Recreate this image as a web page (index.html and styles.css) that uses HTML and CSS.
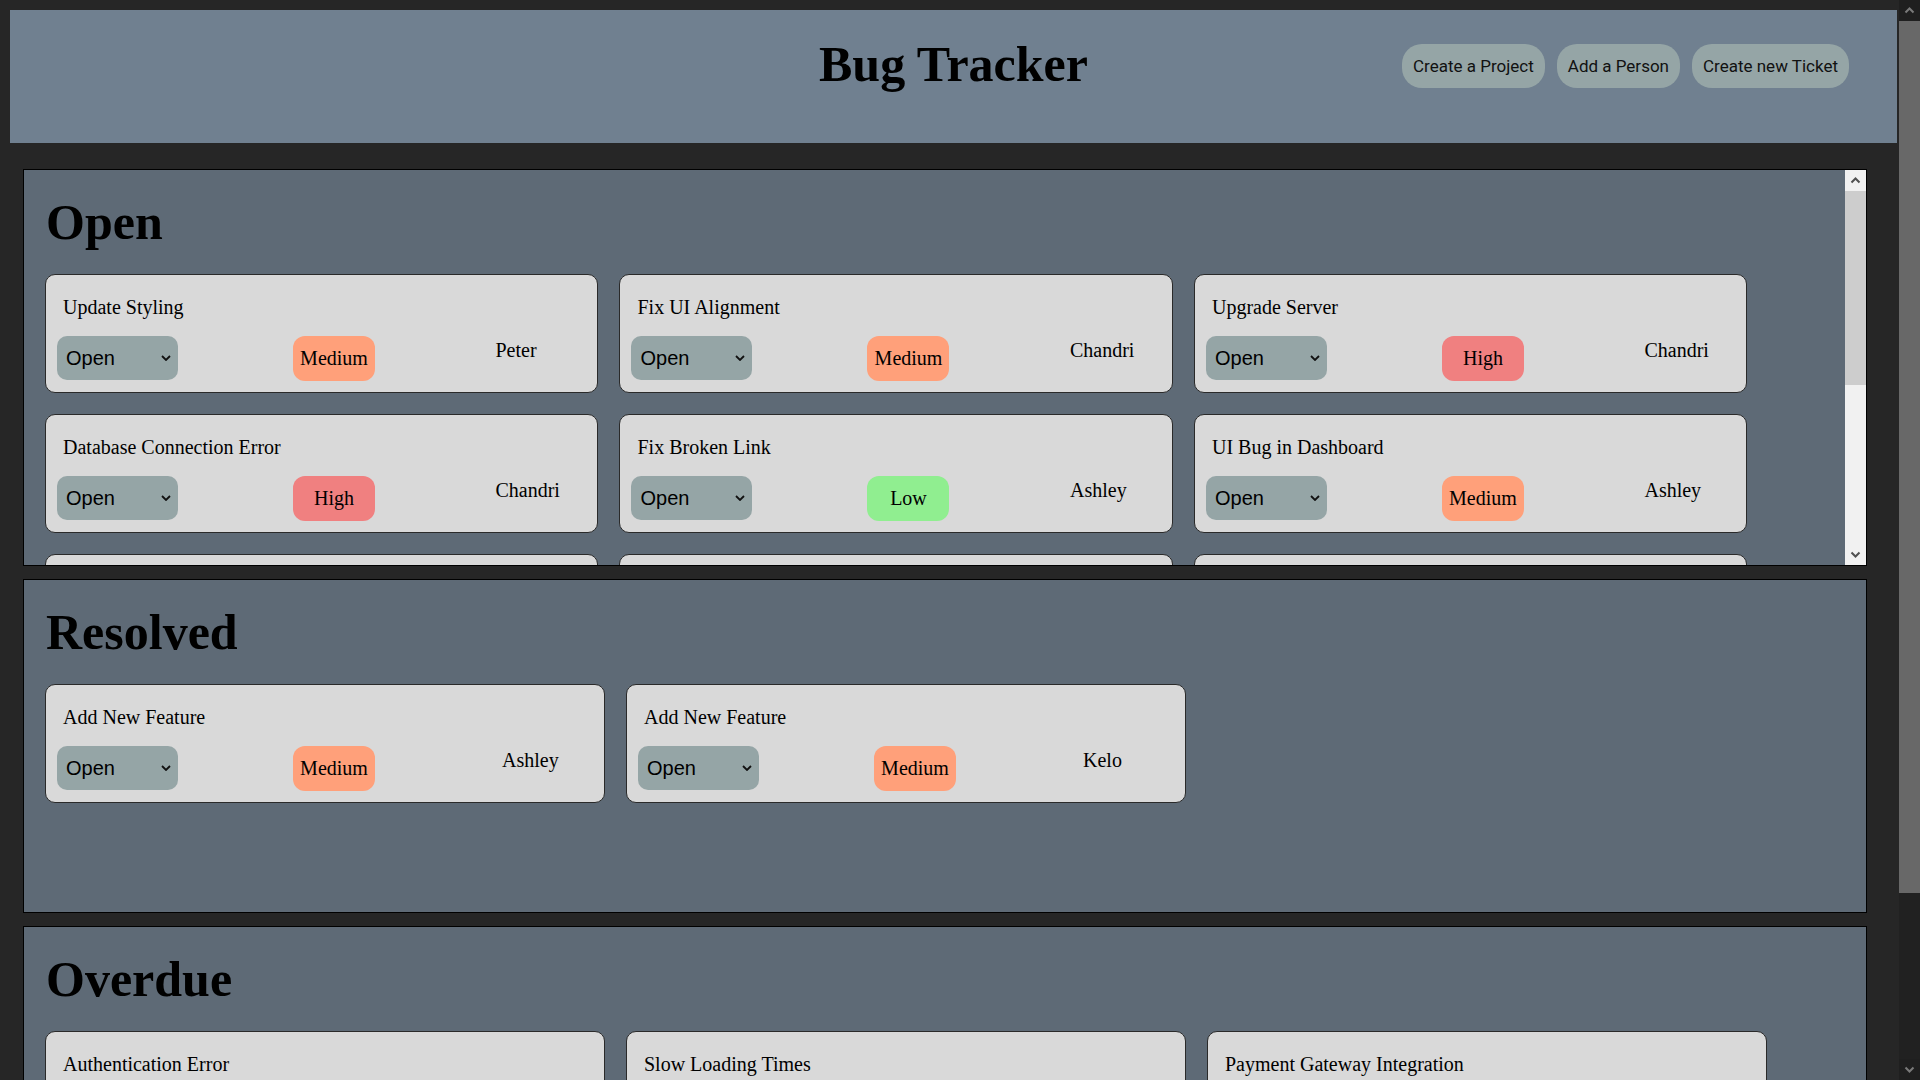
FILE: index.html
```html
<!DOCTYPE html>
<html lang="en">
<head>
<meta charset="utf-8">
<title>Bug Tracker</title>
<link rel="stylesheet" href="styles.css">
</head>
<body>
<header class="topbar">
  <div class="topbar-spacer"></div>
  <h1 class="app-title">Bug Tracker</h1>
  <nav class="actions">
    <button class="action-btn">Create a Project</button>
    <button class="action-btn">Add a Person</button>
    <button class="action-btn">Create new Ticket</button>
  </nav>
</header>

<main class="boards">
  <section class="board board-open">
    <div class="board-scroll">
      <h2 class="board-title">Open</h2>
      <div class="ticket-list">
        <article class="ticket">
          <p class="ticket-title">Update Styling</p>
          <div class="ticket-row">
            <div class="status"><select><option>Open</option><option>Resolved</option><option>Overdue</option></select><svg class="chev" viewBox="0 0 10 6"><path d="M1 1 L5 5 L9 1"/></svg></div>
            <span class="prio prio-medium">Medium</span>
            <span class="assignee">Peter</span>
          </div>
        </article>
        <article class="ticket">
          <p class="ticket-title">Fix UI Alignment</p>
          <div class="ticket-row">
            <div class="status"><select><option>Open</option><option>Resolved</option><option>Overdue</option></select><svg class="chev" viewBox="0 0 10 6"><path d="M1 1 L5 5 L9 1"/></svg></div>
            <span class="prio prio-medium">Medium</span>
            <span class="assignee">Chandri</span>
          </div>
        </article>
        <article class="ticket">
          <p class="ticket-title">Upgrade Server</p>
          <div class="ticket-row">
            <div class="status"><select><option>Open</option><option>Resolved</option><option>Overdue</option></select><svg class="chev" viewBox="0 0 10 6"><path d="M1 1 L5 5 L9 1"/></svg></div>
            <span class="prio prio-high">High</span>
            <span class="assignee">Chandri</span>
          </div>
        </article>
        <article class="ticket">
          <p class="ticket-title">Database Connection Error</p>
          <div class="ticket-row">
            <div class="status"><select><option>Open</option><option>Resolved</option><option>Overdue</option></select><svg class="chev" viewBox="0 0 10 6"><path d="M1 1 L5 5 L9 1"/></svg></div>
            <span class="prio prio-high">High</span>
            <span class="assignee">Chandri</span>
          </div>
        </article>
        <article class="ticket">
          <p class="ticket-title">Fix Broken Link</p>
          <div class="ticket-row">
            <div class="status"><select><option>Open</option><option>Resolved</option><option>Overdue</option></select><svg class="chev" viewBox="0 0 10 6"><path d="M1 1 L5 5 L9 1"/></svg></div>
            <span class="prio prio-low">Low</span>
            <span class="assignee">Ashley</span>
          </div>
        </article>
        <article class="ticket">
          <p class="ticket-title">UI Bug in Dashboard</p>
          <div class="ticket-row">
            <div class="status"><select><option>Open</option><option>Resolved</option><option>Overdue</option></select><svg class="chev" viewBox="0 0 10 6"><path d="M1 1 L5 5 L9 1"/></svg></div>
            <span class="prio prio-medium">Medium</span>
            <span class="assignee">Ashley</span>
          </div>
        </article>
        <article class="ticket">
          <p class="ticket-title">Login Page Crash</p>
          <div class="ticket-row">
            <div class="status"><select><option>Open</option><option>Resolved</option><option>Overdue</option></select><svg class="chev" viewBox="0 0 10 6"><path d="M1 1 L5 5 L9 1"/></svg></div>
            <span class="prio prio-high">High</span>
            <span class="assignee">Kelo</span>
          </div>
        </article>
        <article class="ticket">
          <p class="ticket-title">Update Documentation</p>
          <div class="ticket-row">
            <div class="status"><select><option>Open</option><option>Resolved</option><option>Overdue</option></select><svg class="chev" viewBox="0 0 10 6"><path d="M1 1 L5 5 L9 1"/></svg></div>
            <span class="prio prio-low">Low</span>
            <span class="assignee">Peter</span>
          </div>
        </article>
        <article class="ticket">
          <p class="ticket-title">Optimize Queries</p>
          <div class="ticket-row">
            <div class="status"><select><option>Open</option><option>Resolved</option><option>Overdue</option></select><svg class="chev" viewBox="0 0 10 6"><path d="M1 1 L5 5 L9 1"/></svg></div>
            <span class="prio prio-medium">Medium</span>
            <span class="assignee">Kelo</span>
          </div>
        </article>
      </div>
    </div>
    <div class="vscroll vscroll-light" aria-hidden="true">
      <div class="vscroll-btn"><svg viewBox="0 0 21 21"><path d="M6.5 12.5 L10.5 8.5 L14.5 12.5"/></svg></div>
      <div class="vscroll-thumb section-thumb"></div>
      <div class="vscroll-track"></div>
      <div class="vscroll-btn"><svg viewBox="0 0 21 21"><path d="M6.5 8.5 L10.5 12.5 L14.5 8.5"/></svg></div>
    </div>
  </section>

  <section class="board">
    <h2 class="board-title">Resolved</h2>
    <div class="ticket-list">
      <article class="ticket">
        <p class="ticket-title">Add New Feature</p>
        <div class="ticket-row">
          <div class="status"><select><option>Open</option><option>Resolved</option><option>Overdue</option></select><svg class="chev" viewBox="0 0 10 6"><path d="M1 1 L5 5 L9 1"/></svg></div>
          <span class="prio prio-medium">Medium</span>
          <span class="assignee">Ashley</span>
        </div>
      </article>
      <article class="ticket">
        <p class="ticket-title">Add New Feature</p>
        <div class="ticket-row">
          <div class="status"><select><option>Open</option><option>Resolved</option><option>Overdue</option></select><svg class="chev" viewBox="0 0 10 6"><path d="M1 1 L5 5 L9 1"/></svg></div>
          <span class="prio prio-medium">Medium</span>
          <span class="assignee">Kelo</span>
        </div>
      </article>
    </div>
  </section>

  <section class="board">
    <h2 class="board-title">Overdue</h2>
    <div class="ticket-list">
      <article class="ticket">
        <p class="ticket-title">Authentication Error</p>
        <div class="ticket-row">
          <div class="status"><select><option>Open</option><option>Resolved</option><option>Overdue</option></select><svg class="chev" viewBox="0 0 10 6"><path d="M1 1 L5 5 L9 1"/></svg></div>
          <span class="prio prio-high">High</span>
          <span class="assignee">Kelo</span>
        </div>
      </article>
      <article class="ticket">
        <p class="ticket-title">Slow Loading Times</p>
        <div class="ticket-row">
          <div class="status"><select><option>Open</option><option>Resolved</option><option>Overdue</option></select><svg class="chev" viewBox="0 0 10 6"><path d="M1 1 L5 5 L9 1"/></svg></div>
          <span class="prio prio-medium">Medium</span>
          <span class="assignee">Peter</span>
        </div>
      </article>
      <article class="ticket">
        <p class="ticket-title">Payment Gateway Integration</p>
        <div class="ticket-row">
          <div class="status"><select><option>Open</option><option>Resolved</option><option>Overdue</option></select><svg class="chev" viewBox="0 0 10 6"><path d="M1 1 L5 5 L9 1"/></svg></div>
          <span class="prio prio-low">Low</span>
          <span class="assignee">Chandri</span>
        </div>
      </article>
    </div>
  </section>
</main>

<div class="vscroll vscroll-page" aria-hidden="true">
  <div class="vscroll-btn"><svg viewBox="0 0 21 21"><path d="M6.5 12.5 L10.5 8.5 L14.5 12.5"/></svg></div>
  <div class="vscroll-thumb page-thumb"></div>
  <div class="vscroll-track"></div>
  <div class="vscroll-btn"><svg viewBox="0 0 21 21"><path d="M6.5 8.5 L10.5 12.5 L14.5 8.5"/></svg></div>
</div>
</body>
</html>
```

FILE: styles.css
```css
* { box-sizing: border-box; }

html { background: #262626; scrollbar-width: none; }

body {
  margin: 0;
  padding: 10px 23px 26px 10px;
  background: #262626;
  font-family: "Liberation Serif", "Times New Roman", serif;
  color: #000;
}

/* header */
.topbar {
  display: grid;
  grid-template-columns: 1fr auto 1fr;
  height: 133px;
  background: #708090;
  margin-bottom: 26px;
}

.app-title {
  margin: 25px 0 0;
  font-size: 50px;
  font-weight: bold;
  line-height: normal;
  text-align: center;
}

.actions {
  display: flex;
  justify-content: flex-end;
  align-items: flex-start;
  gap: 12px;
  padding: 34px 48px 0 0;
}

.action-btn {
  height: 44px;
  padding: 0 11px;
  border: none;
  border-radius: 20px;
  background: #95a5a6;
  color: #111;
  font-family: Roboto, "Open Sans", sans-serif;
  font-size: 17px;
  cursor: pointer;
}

/* boards */
.boards { display: flex; flex-direction: column; }

.board {
  margin: 0 30px 13px 13px;
  min-height: 334px;
  padding: 0 21px;
  background: #5e6a76;
  border: 1px solid #000;
}

.board:last-child { margin-bottom: 0; }

.board-open {
  display: flex;
  height: 397px;
  min-height: 0;
  padding: 0;
  overflow: hidden;
}

.board-scroll {
  flex: 1;
  min-width: 0;
  overflow-y: auto;
  scrollbar-width: none;
  padding: 0 21px 76px;
}

.board-title {
  margin: 23px 0 23px 1px;
  font-size: 50px;
  font-weight: bold;
  line-height: normal;
}

.ticket-list {
  display: flex;
  flex-wrap: wrap;
  gap: 21px;
}

.ticket {
  width: calc(31% + 2px);
  height: 119px;
  padding: 0 11px;
  background: #d9d9d9;
  border: 1px solid #2a2a2a;
  border-radius: 10px;
}

.ticket-title {
  margin: 21px 0 17px 6px;
  font-size: 20px;
  line-height: 23px;
  white-space: nowrap;
}

.ticket-row {
  display: flex;
  align-items: flex-start;
}

.status {
  position: relative;
  width: 121px;
  height: 44px;
}

.status select {
  appearance: none;
  -webkit-appearance: none;
  width: 100%;
  height: 44px;
  padding: 0 0 0 9px;
  border: none;
  border-radius: 10px;
  background: #95a5a6;
  color: #000;
  font-family: "Liberation Sans", Arial, sans-serif;
  font-size: 20px;
}

.chev {
  position: absolute;
  right: 7px;
  top: 19px;
  width: 10px;
  height: 6px;
  fill: none;
  stroke: #111;
  stroke-width: 1.8;
  pointer-events: none;
}

.prio {
  display: flex;
  align-items: center;
  justify-content: center;
  width: 82px;
  height: 45px;
  margin-left: 115px;
  border-radius: 12px;
  font-size: 20px;
}

.prio-medium { background: #ffa07a; }
.prio-high { background: #f08080; }
.prio-low { background: #90ee90; }

.assignee {
  width: 91px;
  margin-left: auto;
  padding-top: 3px;
  font-size: 20px;
  line-height: 23px;
}

/* drawn scrollbars */
.vscroll {
  display: flex;
  flex-direction: column;
  width: 21px;
  flex: none;
}

.vscroll-btn {
  height: 21px;
  flex: none;
}

.vscroll-btn svg {
  display: block;
  width: 21px;
  height: 21px;
  fill: none;
  stroke-width: 2;
}

.vscroll-track { flex: 1; }

.vscroll-light { background: #f1f1f1; }
.vscroll-light .vscroll-btn svg { stroke: #505050; }
.section-thumb { height: 194px; flex: none; background: #cdcdcd; }

.vscroll-page {
  position: fixed;
  top: 0;
  right: 0;
  height: 100vh;
  background: #212121;
}
.vscroll-page .vscroll-btn { background: #1f1f1f; }
.vscroll-page .vscroll-btn svg { stroke: #7a7a7a; }
.page-thumb { height: 872px; flex: none; background: #686868; }
```
